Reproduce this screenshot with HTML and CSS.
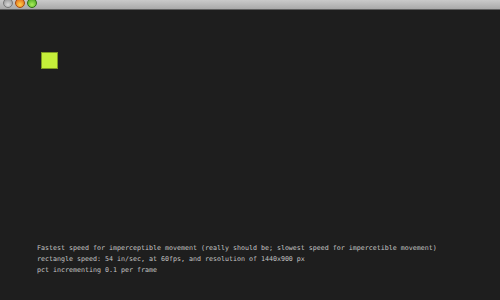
FILE: index.html
```html
<!DOCTYPE html>
<html>
<head>
    <title>Imperceptible Movement</title>
    <link rel="stylesheet" href="styles.css">
</head>
<body>
    <div class="window">
        <!-- window chrome -->
        <div class="titlebar">
            <span class="light close"></span>
            <span class="light min"></span>
            <span class="light max"></span>
        </div>

        <div class="stage">
            <div class="rect"></div>
            <div class="notes">
                <div>Fastest speed for imperceptible movement (really should be; slowest speed for impercetible movement)</div>
                <div>rectangle speed: 54 in/sec, at 60fps, and resolution of 1440x900 px</div>
                <div>pct incrementing 0.1 per frame</div>
            </div>
        </div>
    </div>
</body>
</html>
```

FILE: styles.css
```css
html, body {
    margin: 0;
    height: 100%;
    background-color: #1e1e1e;
    overflow: hidden;
}

.window {
    display: flex;
    flex-direction: column;
    height: 300px;
    width: 500px;
}

.titlebar {
    height: 9px;
    background: linear-gradient(#c9c9c9, #a9a9a9);
    border-bottom: 1px solid #5e5e5e;
    display: flex;
    align-items: flex-end;
    gap: 2px;
    padding-left: 3px;
    overflow: hidden;
}

.light {
    width: 8px;
    height: 8px;
    border-radius: 50%;
    margin-bottom: 1px;
}

.close {
    background: radial-gradient(circle at 50% 70%, #d8d8d8, #8a8a8a);
    border: 0.5px solid #777;
}

.min {
    background: radial-gradient(circle at 50% 70%, #ffd04a, #e05a10);
    border: 0.5px solid #a34a10;
}

.max {
    background: radial-gradient(circle at 50% 70%, #a8f05a, #3f9a1a);
    border: 0.5px solid #2f7214;
}

.stage {
    flex: 1;
    display: flex;
    flex-direction: column;
    padding: 0 0 24px 37px;
    position: relative;
}

/* rectangle sits wherever the animation put it */
.rect {
    position: absolute;
    left: 41px;
    top: 42px;
    width: 15px;
    height: 15px;
    background-color: #c5f03a;
    border: 1px solid #7e9a22;
}

.notes {
    margin-top: auto;
    font-family: "DejaVu Sans Mono", "Liberation Mono", monospace;
    font-size: 6.65px;
    line-height: 11px;
    color: #c4c4c4;
    white-space: nowrap;
}
```
